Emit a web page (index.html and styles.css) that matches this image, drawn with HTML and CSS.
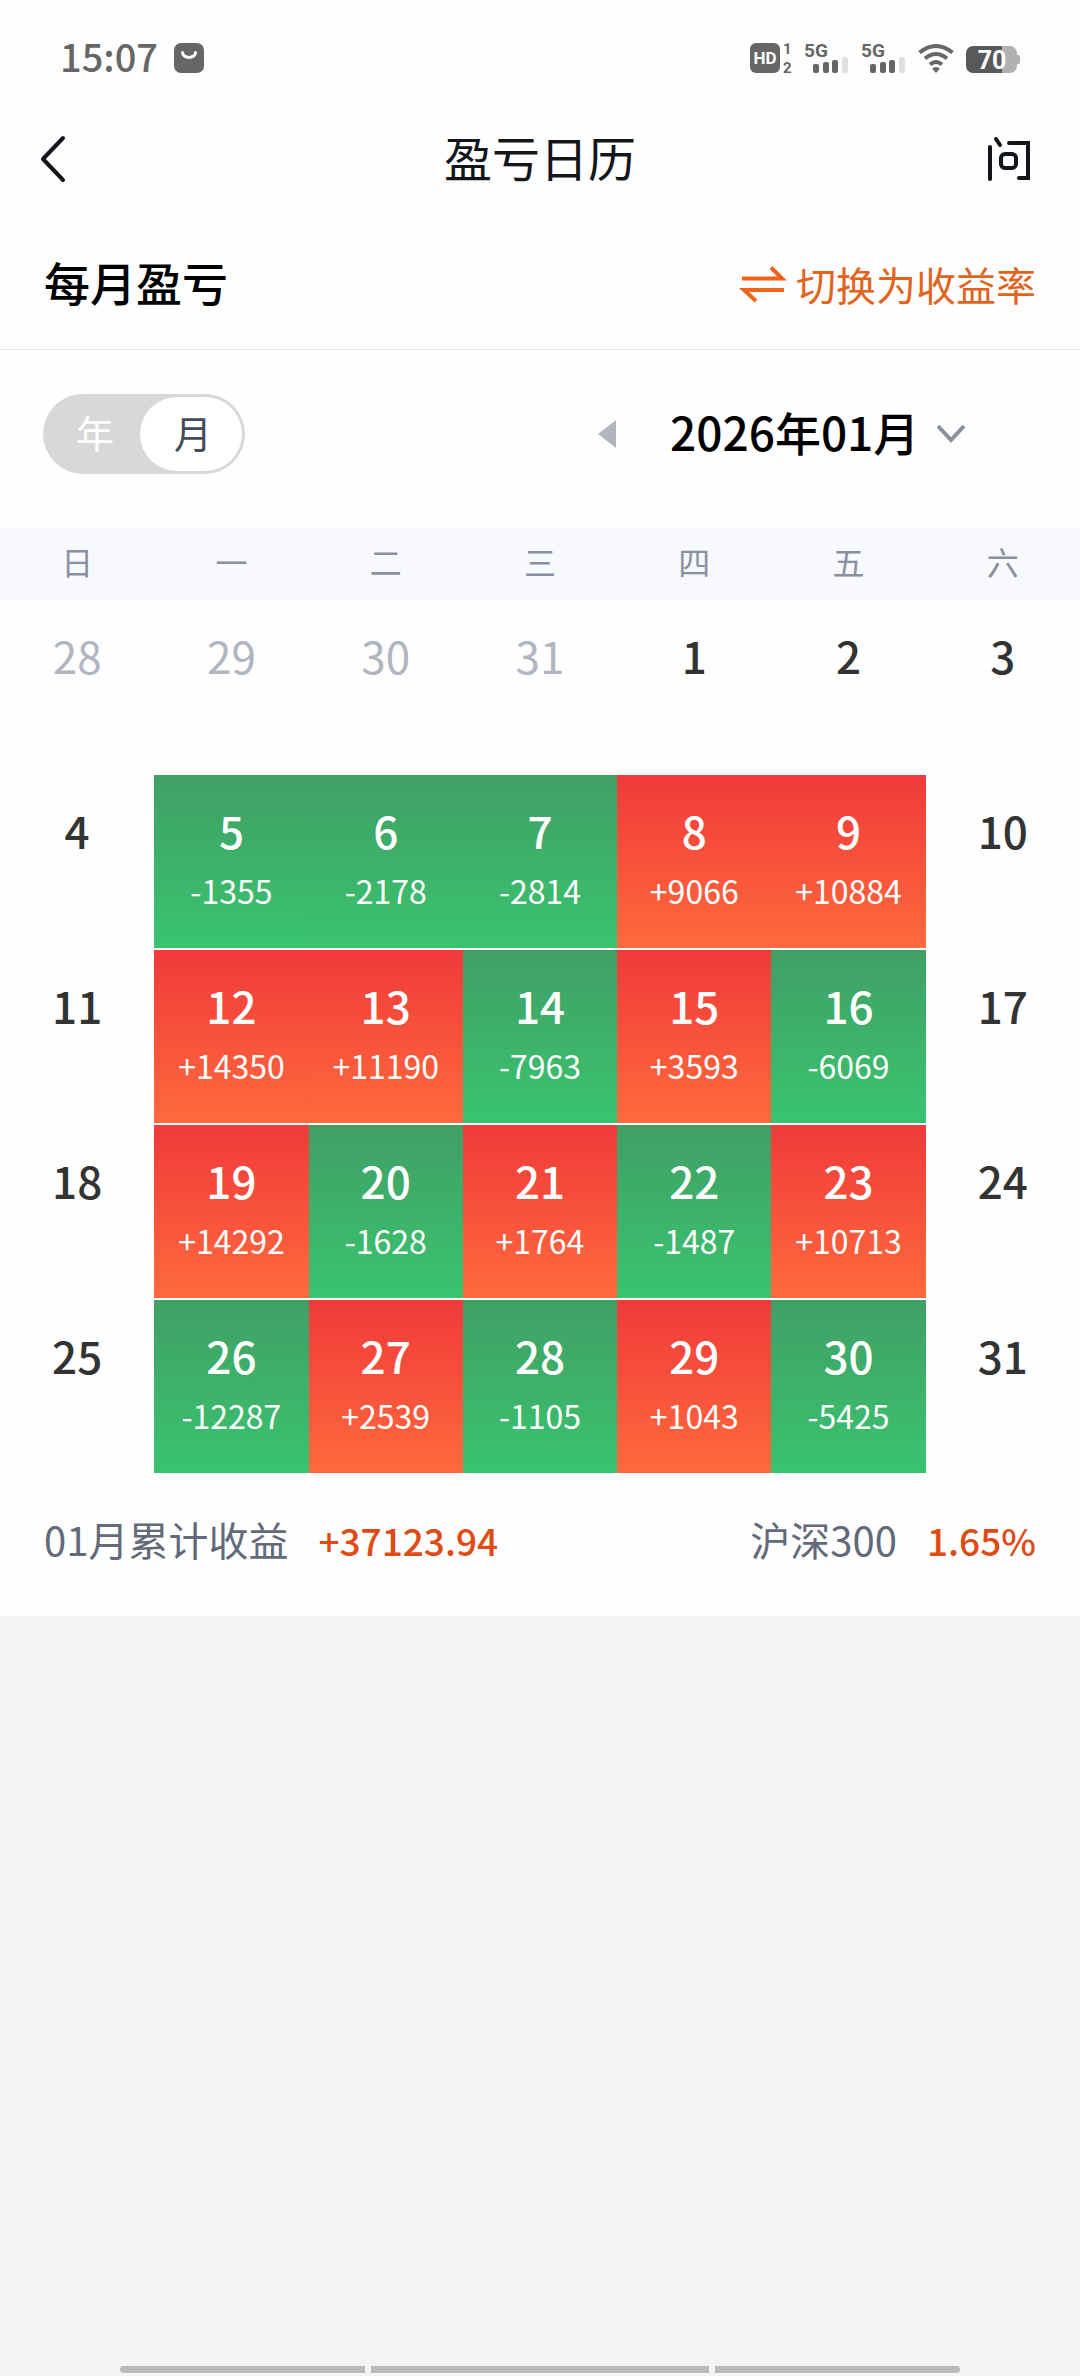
FILE: index.html
```html
<!DOCTYPE html>
<html lang="zh-CN">
<head>
<meta charset="utf-8">
<meta name="viewport" content="width=device-width, initial-scale=1">
<title>盈亏日历</title>
<link rel="stylesheet" href="styles.css">
</head>
<body>
<div class="statusbar">
  <div class="status-group">
    <span class="clock">15:07</span>
    <svg class="icon" width="30" height="30" viewBox="0 0 30 30"><rect width="30" height="30" rx="7" fill="#666"/><path d="M8.500 9.500a6.500 5 0 0 0 13 0" fill="none" stroke="#fff" stroke-width="3" stroke-linecap="round"/></svg>
  </div>
  <div class="status-group status-icons">
    <svg class="icon" width="42" height="30" viewBox="0 0 42 30"><rect width="30" height="30" rx="6" fill="#666"/><text class="st-hd" x="15" y="21" text-anchor="middle">HD</text><text class="st-sub" x="33" y="11">1</text><text class="st-sub" x="33" y="30">2</text></svg>
    <svg class="icon" width="45" height="30" viewBox="0 0 45 30"><text class="st-net" x="0" y="14">5G</text><g fill="#666"><rect x="9" y="21" width="6" height="9" rx="2"/><rect x="19" y="19" width="6" height="11" rx="2"/><rect x="28" y="17" width="6" height="13" rx="2"/></g><rect x="38" y="14" width="6" height="16" rx="2" fill="#e0e0e0"/></svg>
    <svg class="icon" width="45" height="30" viewBox="0 0 45 30"><text class="st-net" x="0" y="14">5G</text><g fill="#666"><rect x="9" y="21" width="6" height="9" rx="2"/><rect x="19" y="19" width="6" height="11" rx="2"/><rect x="28" y="17" width="6" height="13" rx="2"/></g><rect x="38" y="14" width="6" height="16" rx="2" fill="#e0e0e0"/></svg>
    <svg class="icon" width="36" height="30" viewBox="0 0 36 30"><g fill="none" stroke="#666" stroke-width="4"><path d="M1.500 9.500Q18-3.500 34.500 9.500"/><path d="M7 15.500Q18 6.500 29 15.500"/><path d="M12 21.500Q18 16.500 24 21.500"/></g><path d="M14 25.500q4-3 8 0l-4 4.500z" fill="#666"/></svg>
    <svg class="icon" width="54" height="30" viewBox="0 0 54 30"><path d="M36 3h8a7 7 0 0 1 7 7v2h1q2 0 2 2v5q0 2-2 2h-1v2a7 7 0 0 1-7 7h-8z" fill="#b0b0b0"/><path d="M36 3H7a7 7 0 0 0-7 7v13a7 7 0 0 0 7 7h29z" fill="#595959"/><text class="st-bat" x="26" y="26" text-anchor="middle">70</text></svg>
  </div>
</div>

<header class="navbar">
  <button class="nav-btn nav-back" aria-label="返回"><svg class="icon" width="26" height="46" viewBox="0 0 26 46"><path d="M23 2L3 23l20 21" fill="none" stroke="#12161a" stroke-width="4" stroke-linecap="round" stroke-linejoin="round"/></svg></button>
  <h1 class="nav-title">盈亏日历</h1>
  <button class="nav-btn nav-ask" aria-label="帮助"><svg class="icon" width="42" height="44" viewBox="0 0 42 44"><g fill="none" stroke="#12161a" stroke-width="4" stroke-linecap="round"><path d="M2 10v32M8 2l4 6"/><path d="M21 6h19v35H31"/><rect x="13" y="17" width="15" height="14" rx="4"/></g></svg></button>
</header>

<main class="panel">
  <section class="panel-head">
    <h2 class="panel-title">每月盈亏</h2>
    <button class="switch-btn">
      <svg class="icon" width="42" height="38" viewBox="0 0 42 38"><path d="M0 13.500h40L29 2.500M42 25H2l12 11" fill="none" stroke="#f0641a" stroke-width="4"/></svg>
      <span>切换为收益率</span>
    </button>
  </section>

  <section class="controls">
    <div class="toggle" role="radiogroup" aria-label="周期">
      <label class="toggle-item"><input type="radio" name="period" value="year"><span>年</span></label>
      <label class="toggle-item"><input type="radio" name="period" value="month" checked><span>月</span></label>
    </div>
    <div class="month-nav">
      <button class="prev" aria-label="上个月"><svg class="icon" width="18" height="28" viewBox="0 0 18 28"><path d="M18 0v28L0 14z" fill="#b0b5c0"/></svg></button>
      <div class="month-picker">
        <select class="month-select" aria-label="选择月份"><option>2026年01月</option></select>
        <svg class="month-arrow" width="30" height="20" viewBox="0 0 30 20"><path d="M2 2l13 14L28 2" fill="none" stroke="#8a90a0" stroke-width="4"/></svg>
      </div>
    </div>
  </section>

  <table class="calendar">
    <thead>
      <tr><th scope="col">日</th><th scope="col">一</th><th scope="col">二</th><th scope="col">三</th><th scope="col">四</th><th scope="col">五</th><th scope="col">六</th></tr>
    </thead>
    <tbody>
      <tr>
        <td class="muted"><b>28</b></td><td class="muted"><b>29</b></td><td class="muted"><b>30</b></td><td class="muted"><b>31</b></td><td><b>1</b></td><td><b>2</b></td><td><b>3</b></td>
      </tr>
      <tr>
        <td><b>4</b></td>
        <td class="loss"><b>5</b><span>-1355</span></td>
        <td class="loss"><b>6</b><span>-2178</span></td>
        <td class="loss"><b>7</b><span>-2814</span></td>
        <td class="gain"><b>8</b><span>+9066</span></td>
        <td class="gain"><b>9</b><span>+10884</span></td>
        <td><b>10</b></td>
      </tr>
      <tr>
        <td><b>11</b></td>
        <td class="gain"><b>12</b><span>+14350</span></td>
        <td class="gain"><b>13</b><span>+11190</span></td>
        <td class="loss"><b>14</b><span>-7963</span></td>
        <td class="gain"><b>15</b><span>+3593</span></td>
        <td class="loss"><b>16</b><span>-6069</span></td>
        <td><b>17</b></td>
      </tr>
      <tr>
        <td><b>18</b></td>
        <td class="gain"><b>19</b><span>+14292</span></td>
        <td class="loss"><b>20</b><span>-1628</span></td>
        <td class="gain"><b>21</b><span>+1764</span></td>
        <td class="loss"><b>22</b><span>-1487</span></td>
        <td class="gain"><b>23</b><span>+10713</span></td>
        <td><b>24</b></td>
      </tr>
      <tr>
        <td><b>25</b></td>
        <td class="loss"><b>26</b><span>-12287</span></td>
        <td class="gain"><b>27</b><span>+2539</span></td>
        <td class="loss"><b>28</b><span>-1105</span></td>
        <td class="gain"><b>29</b><span>+1043</span></td>
        <td class="loss"><b>30</b><span>-5425</span></td>
        <td><b>31</b></td>
      </tr>
    </tbody>
  </table>

  <section class="summary">
    <p class="summary-item"><span>01月累计收益</span><strong>+37123.94</strong></p>
    <p class="summary-item"><span>沪深300</span><strong>1.65%</strong></p>
  </section>
</main>

<div class="gesture-bar"><i></i><i></i><i></i></div>
</body>
</html>
```
FILE: styles.css
```css
* {
  box-sizing: border-box;
}

body {
  margin: 0;
  min-height: 100vh;
  display: flex;
  flex-direction: column;
  background: #f4f4f4;
  color: #000;
  font-family: "Noto Sans CJK SC", "Noto Sans", sans-serif;
}

h1, h2, p {
  margin: 0;
}

button, select {
  padding: 0;
  border: 0;
  background: none;
  color: inherit;
  font: inherit;
}

.icon {
  display: block;
  flex: none;
  overflow: visible;
}

/* System status bar */
.statusbar {
  display: flex;
  align-items: center;
  justify-content: space-between;
  height: 116px;
  padding: 0 60px;
  background: #fefefe;
}

.status-group {
  display: flex;
  align-items: center;
  gap: 16px;
}

.status-icons {
  gap: 12px;
}

.clock {
  padding-bottom: 4px;
  color: #666;
  font-size: 38px;
  font-weight: 500;
  line-height: 40px;
}

.statusbar text {
  font-family: Roboto, sans-serif;
  font-weight: 700;
  fill: #666;
}

.statusbar .st-hd {
  font-size: 17px;
  fill: #fff;
}

.statusbar .st-sub {
  font-size: 15px;
}

.statusbar .st-net {
  font-size: 19px;
}

.statusbar .st-bat {
  font-size: 25px;
  fill: #fff;
}

/* Navigation bar */
.navbar {
  display: flex;
  align-items: center;
  justify-content: space-between;
  height: 86px;
  padding: 0 40px;
  background: #fefefe;
}

.nav-btn {
  display: flex;
  flex: 1;
}

.nav-ask {
  justify-content: flex-end;
}

.nav-ask .icon {
  margin-right: 10px;
}

.nav-title {
  padding-bottom: 6px;
  color: #12161a;
  font-size: 48px;
  font-weight: 400;
  line-height: 56px;
}

/* Panel */
.panel {
  background: #fefefe;
}

.panel-head {
  display: flex;
  align-items: center;
  justify-content: space-between;
  height: 148px;
  padding: 16px 44px 0;
  border-bottom: 1px solid #e4e4e4;
}

.panel-title {
  padding-bottom: 6px;
  font-size: 46px;
  font-weight: 500;
  line-height: 56px;
}

.switch-btn {
  display: flex;
  align-items: center;
  gap: 12px;
  color: #e0641e;
  font-size: 40px;
  line-height: 48px;
}

.controls {
  display: flex;
  align-items: center;
  justify-content: space-between;
  height: 178px;
  padding: 0 114px 10px 43px;
}

.toggle {
  display: flex;
  width: 202px;
  height: 80px;
  padding: 3px;
  border-radius: 40px;
  background: #d8d8d8;
}

.toggle-item {
  display: flex;
  flex: 1;
}

.toggle-item input {
  position: absolute;
  opacity: 0;
}

.toggle-item span {
  display: flex;
  flex: 1;
  align-items: center;
  justify-content: center;
  padding: 0 0 4px 4px;
  border-radius: 37px;
  color: #fff;
  font-size: 38px;
  line-height: 48px;
}

.toggle-item:last-child {
  flex: none;
  width: 102px;
}

.toggle-item input:checked + span {
  background: #fff;
  color: #444b59;
}

.month-nav {
  display: flex;
  align-items: center;
  gap: 54px;
}

.month-picker {
  position: relative;
}

.month-select {
  appearance: none;
  display: block;
  padding: 0 46px 6px 0;
  font-size: 46px;
  font-weight: 500;
  line-height: 56px;
}

.month-arrow {
  position: absolute;
  top: 50%;
  right: 0;
  margin-top: -10px;
  pointer-events: none;
}

/* Calendar */
.calendar {
  width: 100%;
  table-layout: fixed;
  border-collapse: separate;
  border-spacing: 0;
}

.calendar th {
  height: 72px;
  padding: 0 0 6px;
  background: #f7f9fc;
  color: #8a90a0;
  font-size: 32px;
  font-weight: 400;
  line-height: 48px;
}

.calendar td {
  height: 175px;
  padding: 27px 0 0;
  border-bottom: 2px solid #fefefe;
  color: #333;
  text-align: center;
  vertical-align: top;
}

.calendar b {
  display: block;
  font-size: 44px;
  font-weight: 500;
  line-height: 56px;
}

.calendar span {
  display: block;
  margin-top: 8px;
  font-size: 32px;
  line-height: 48px;
}

.calendar .muted {
  color: #b0b5c0;
}

.calendar .muted b {
  font-weight: 400;
}

.calendar .loss,
.calendar .gain {
  background-clip: padding-box;
  background-origin: padding-box;
  color: #fff;
}

.calendar .loss {
  background-image: linear-gradient(#419f66, #39c46e);
}

.calendar .gain {
  background-image: linear-gradient(#f03a3a, #ff6a3d);
}

/* Totals */
.summary {
  display: flex;
  align-items: center;
  justify-content: space-between;
  height: 141px;
  padding: 0 44px 12px;
}

.summary-item {
  display: flex;
  align-items: baseline;
  gap: 30px;
  color: #626979;
  font-size: 40px;
  line-height: 48px;
}

.summary-item strong {
  color: #e04a14;
  font-size: 37px;
  font-weight: 500;
}

/* Gesture hint */
.gesture-bar {
  display: flex;
  gap: 6px;
  margin-top: auto;
  padding: 0 120px 3px;
}

.gesture-bar i {
  flex: 245;
  height: 7px;
  background: #bababa;
}

.gesture-bar i:nth-child(2) {
  flex: 338;
}

.gesture-bar i:first-child {
  border-radius: 4px 0 0 4px;
}

.gesture-bar i:last-child {
  border-radius: 0 4px 4px 0;
}
```
